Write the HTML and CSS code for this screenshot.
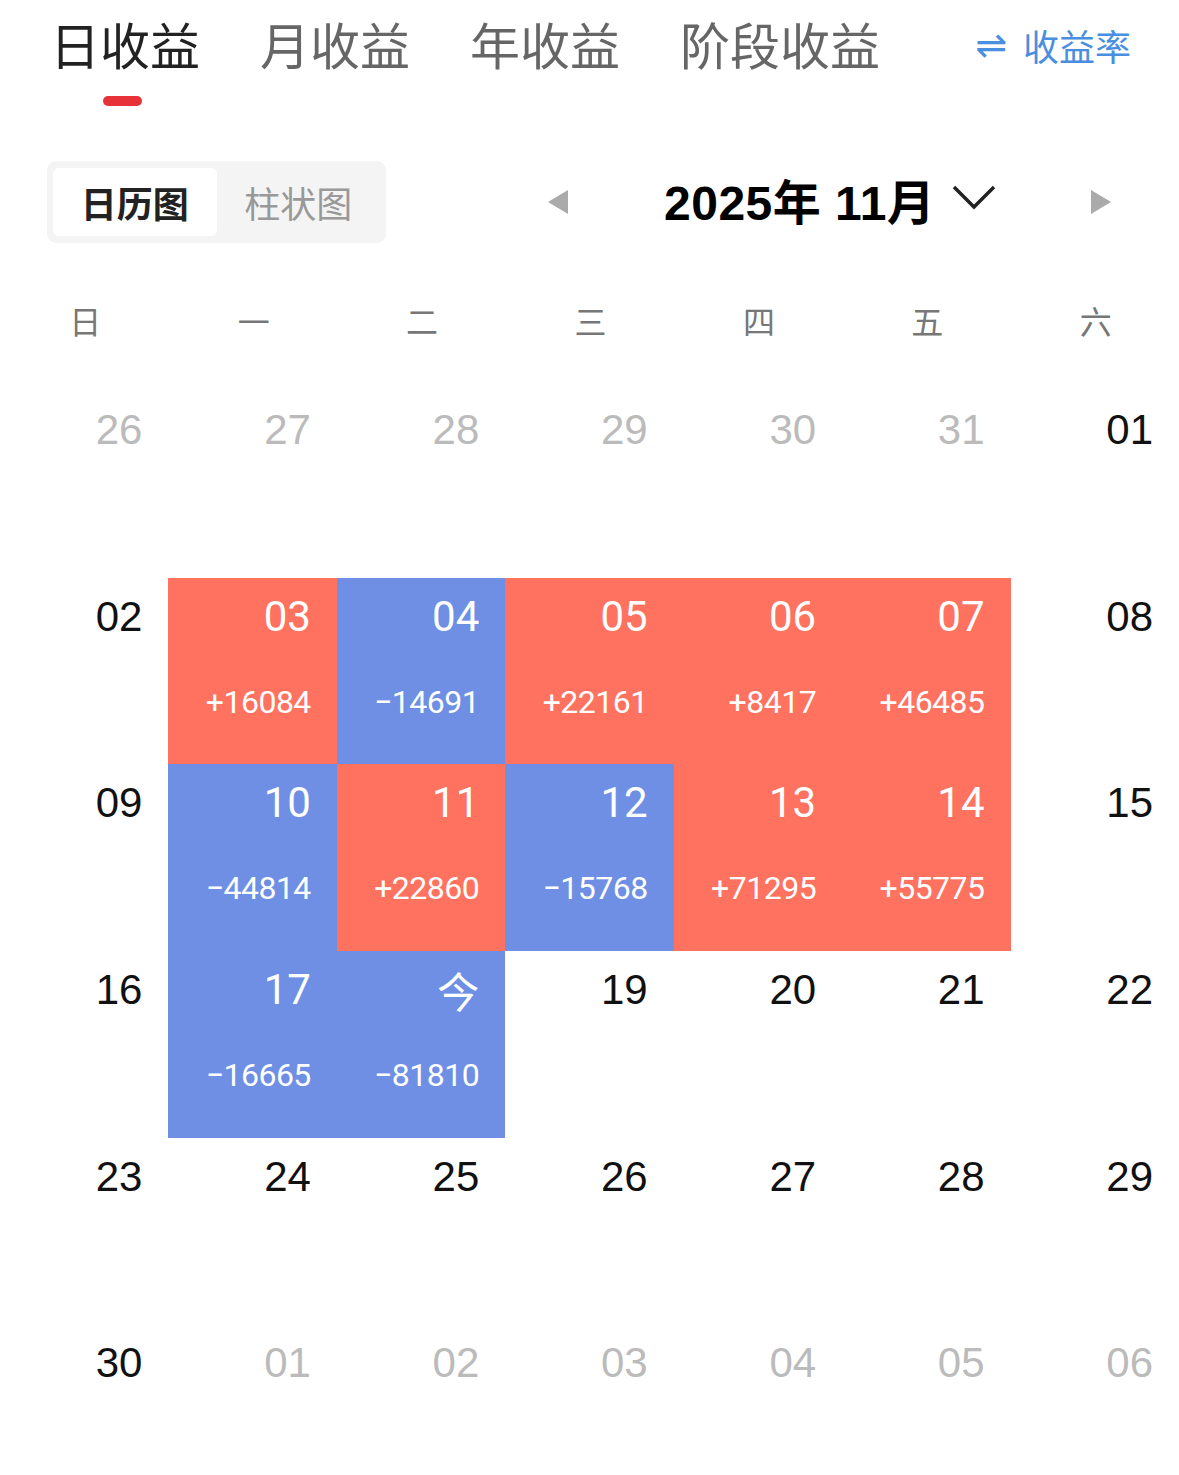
FILE: index.html
```html
<!DOCTYPE html>
<html lang="zh">
<head>
<meta charset="utf-8">
<link rel="stylesheet" href="styles.css">
</head>
<body>
<div class="page">
  <div class="tabs">
    <div class="tab active">日收益<span class="bar"></span></div>
    <div class="tab">月收益</div>
    <div class="tab">年收益</div>
    <div class="tab">阶段收益</div>
    <div class="rate"><span class="swap">⇌</span>收益率</div>
  </div>

  <div class="toolbar">
    <div class="segment">
      <div class="seg on">日历图</div>
      <div class="seg">柱状图</div>
    </div>
    <div class="monthnav">
      <span class="tri left"></span>
      <div class="month">2025年 11月
        <svg class="chev" width="46" height="30" viewBox="0 0 46 30"><path d="M3 5 L23 25 L43 5" fill="none" stroke="#222" stroke-width="3.5"/></svg>
      </div>
      <span class="tri right"></span>
    </div>
  </div>

  <div class="weekdays">
    <div>日</div><div>一</div><div>二</div><div>三</div><div>四</div><div>五</div><div>六</div>
  </div>

  <div class="cal">
    <div class="cell out"><span class="d">26</span></div>
    <div class="cell out"><span class="d">27</span></div>
    <div class="cell out"><span class="d">28</span></div>
    <div class="cell out"><span class="d">29</span></div>
    <div class="cell out"><span class="d">30</span></div>
    <div class="cell out"><span class="d">31</span></div>
    <div class="cell"><span class="d">01</span></div>

    <div class="cell"><span class="d">02</span></div>
    <div class="cell up"><span class="d">03</span><span class="v">+16084</span></div>
    <div class="cell down"><span class="d">04</span><span class="v">−14691</span></div>
    <div class="cell up"><span class="d">05</span><span class="v">+22161</span></div>
    <div class="cell up"><span class="d">06</span><span class="v">+8417</span></div>
    <div class="cell up"><span class="d">07</span><span class="v">+46485</span></div>
    <div class="cell"><span class="d">08</span></div>

    <div class="cell"><span class="d">09</span></div>
    <div class="cell down"><span class="d">10</span><span class="v">−44814</span></div>
    <div class="cell up"><span class="d">11</span><span class="v">+22860</span></div>
    <div class="cell down"><span class="d">12</span><span class="v">−15768</span></div>
    <div class="cell up"><span class="d">13</span><span class="v">+71295</span></div>
    <div class="cell up"><span class="d">14</span><span class="v">+55775</span></div>
    <div class="cell"><span class="d">15</span></div>

    <div class="cell"><span class="d">16</span></div>
    <div class="cell down"><span class="d">17</span><span class="v">−16665</span></div>
    <div class="cell down"><span class="d cjk">今</span><span class="v">−81810</span></div>
    <div class="cell"><span class="d">19</span></div>
    <div class="cell"><span class="d">20</span></div>
    <div class="cell"><span class="d">21</span></div>
    <div class="cell"><span class="d">22</span></div>

    <div class="cell"><span class="d">23</span></div>
    <div class="cell"><span class="d">24</span></div>
    <div class="cell"><span class="d">25</span></div>
    <div class="cell"><span class="d">26</span></div>
    <div class="cell"><span class="d">27</span></div>
    <div class="cell"><span class="d">28</span></div>
    <div class="cell"><span class="d">29</span></div>

    <div class="cell"><span class="d">30</span></div>
    <div class="cell out"><span class="d">01</span></div>
    <div class="cell out"><span class="d">02</span></div>
    <div class="cell out"><span class="d">03</span></div>
    <div class="cell out"><span class="d">04</span></div>
    <div class="cell out"><span class="d">05</span></div>
    <div class="cell out"><span class="d">06</span></div>
  </div>
</div>
</body>
</html>
```

FILE: styles.css
```css
html, body {
  margin: 0;
  padding: 0;
  background: #fff;
}
body {
  font-family: "Noto Sans CJK SC", "Noto Sans", sans-serif;
  color: #111;
}
.page {
  width: 1179px;
  height: 1475px;
  overflow: hidden;
}
.tabs {
  height: 120px;
  display: flex;
  align-items: flex-start;
  padding-left: 50px;
  padding-right: 48px;
}
.tab {
  position: relative;
  font-size: 50px;
  line-height: 50px;
  margin-top: 18px;
  color: #666;
  margin-right: 60px;
}
.tab.active {
  color: #222;
}
.tab .bar {
  position: absolute;
  left: 53px;
  top: 78px;
  width: 39px;
  height: 10px;
  border-radius: 5px;
  background: #e8323a;
}
.rate {
  margin-left: auto;
  margin-top: 24px;
  font-size: 36px;
  line-height: 42px;
  color: #4a8ee0;
  display: flex;
  align-items: center;
}
.rate .swap {
  font-family: "DejaVu Sans", sans-serif;
  font-size: 38px;
  margin-right: 16px;
}
.toolbar {
  display: flex;
  align-items: center;
  margin-top: 41px;
  height: 82px;
}
.segment {
  margin-left: 47px;
  width: 339px;
  height: 82px;
  box-sizing: border-box;
  background: #f4f4f4;
  border-radius: 9px;
  padding: 7px 6px;
  display: flex;
}
.seg {
  width: 164px;
  display: flex;
  align-items: center;
  justify-content: center;
  font-size: 36px;
  color: #999;
  border-radius: 6px;
}
.seg.on {
  background: #fff;
  color: #222;
  font-weight: 700;
}
.monthnav {
  display: flex;
  align-items: center;
  margin-left: 162px;
}
.tri {
  width: 0;
  height: 0;
  border-top: 12px solid transparent;
  border-bottom: 12px solid transparent;
}
.tri.left {
  border-right: 20px solid #aaa;
}
.tri.right {
  border-left: 20px solid #aaa;
}
.month {
  display: flex;
  align-items: center;
  margin-left: 96px;
  margin-right: 94px;
  font-family: "Liberation Sans", "Noto Sans CJK SC", sans-serif;
  font-weight: 700;
  font-size: 48px;
  letter-spacing: 0.5px;
  color: #000;
  margin-top: -6px;
}
.chev {
  margin-left: 16px;
  margin-top: -4px;
}
.weekdays {
  margin-top: 47px;
  display: grid;
  grid-template-columns: repeat(7, 1fr);
  height: 62px;
  align-items: center;
}
.weekdays div {
  text-align: center;
  font-size: 32px;
  color: #777;
  font-family: "Noto Sans CJK SC", sans-serif;
  font-weight: 400;
  padding-left: 2px;
  margin-top: -3px;
}
.cal {
  margin-top: 39px;
  display: grid;
  grid-template-columns: repeat(7, 1fr);
  grid-auto-rows: 186.7px;
}
.cell {
  display: flex;
  flex-direction: column;
  align-items: flex-end;
  padding-right: 26px;
  box-sizing: border-box;
}
.cell .d {
  font-family: "Liberation Sans", sans-serif;
  font-size: 42px;
  line-height: 48px;
  margin-top: 15px;
  color: #111;
}
.cell.out .d {
  color: #bbb;
}
.cell .v {
  margin-top: 43px;
  font-family: "Roboto", sans-serif;
  font-size: 32px;
  line-height: 36px;
  letter-spacing: -0.5px;
  color: #fff;
}
.cell.up { background: #ff725f; }
.cell.down { background: #6e8fe4; }
.cell.up .d, .cell.down .d {
  color: #fff;
  font-family: "Roboto", sans-serif;
  font-weight: 400;
}
.cell .d.cjk {
  font-family: "Noto Sans CJK SC", sans-serif;
  font-weight: 400;
  font-size: 42px;
}
```
